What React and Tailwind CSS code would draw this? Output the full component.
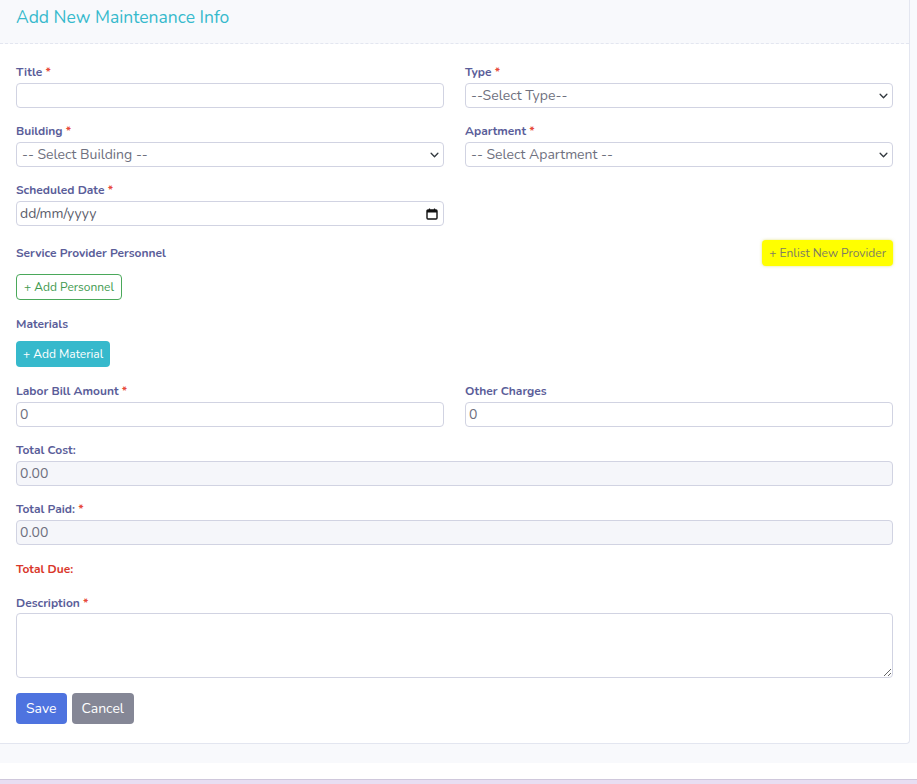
import React from "react";

const font = { fontFamily: '"Nunito", "Noto Sans", "Open Sans", sans-serif' };

function Label({ children, required, className = "" }) {
  return (
    <label className={`block text-[12px] leading-[15px] font-bold text-[#5a5d99] ${className}`}>
      {children}
      {required && <span className="text-[#e74a3b]"> *</span>}
    </label>
  );
}

function Chevron() {
  return (
    <svg className="absolute right-[4px] top-1/2 -translate-y-1/2" width="9" height="9" viewBox="0 0 16 16" fill="none">
      <path d="M2 5l6 6 6-6" stroke="#343a40" strokeWidth="2.4" strokeLinecap="round" strokeLinejoin="round" />
    </svg>
  );
}

function Select({ text }) {
  return (
    <div className="relative h-[25px] rounded-[4px] border border-[#d1d3e2] bg-white px-[5px] text-[14px] leading-[23px] text-[#6e707e]">
      {text}
      <Chevron />
    </div>
  );
}

function Input({ value = "", disabled }) {
  return (
    <input
      readOnly
      value={value}
      className={`block h-[25px] w-full rounded-[4px] border border-[#d1d3e2] px-[3px] text-[14px] text-[#6e707e] outline-none ${disabled ? "bg-[#f5f6fa]" : "bg-white"}`}
    />
  );
}

export default function App() {
  return (
    <div className="min-h-[784px] bg-[#f8f9fc]" style={font}>
      <div className="w-[910px] rounded-br-[4px] border-r border-b border-[#e3e6f0] bg-white">
        <div className="flex h-[44px] items-center border-b border-dashed border-[#e3e6f0] bg-[#f8f9fc] px-4 pb-[8px]">
          <h1 className="text-[17.5px] font-normal text-[#36b9cc]">Add New Maintenance Info</h1>
        </div>

        <div className="px-4 pt-[21px] pb-[19px]">
          <div className="grid grid-cols-2 gap-x-[21px]">
            <div className="mb-[16px]">
              <Label required className="mb-[3px]">Title</Label>
              <Input />
            </div>
            <div className="mb-[16px]">
              <Label required className="mb-[3px]">Type</Label>
              <Select text="--Select Type--" />
            </div>
            <div className="mb-[16px]">
              <Label required className="mb-[3px]">Building</Label>
              <Select text="-- Select Building --" />
            </div>
            <div className="mb-[16px]">
              <Label required className="mb-[3px]">Apartment</Label>
              <Select text="-- Select Apartment --" />
            </div>
            <div className="mb-[15px]">
              <Label required className="mb-[3px]">Scheduled Date</Label>
              <div className="flex h-[25px] items-center justify-between rounded-[4px] border border-[#d1d3e2] bg-white pl-[3px] pr-[5px] text-[14px] text-[#6e707e]">
                <span className="text-[#5a5c69]">dd/mm/yyyy</span>
                <svg width="12" height="12" viewBox="0 0 12 12" fill="none">
                  <rect x="1" y="2" width="10" height="9" rx="1" stroke="#111" strokeWidth="1.4" />
                  <rect x="1" y="2" width="10" height="2.5" fill="#111" />
                  <path d="M3.5 0.5v2M8.5 0.5v2" stroke="#111" strokeWidth="1.2" />
                </svg>
              </div>
            </div>
            <div />
          </div>

          <div className="-mt-[1px] flex items-center justify-between">
            <Label>Service Provider Personnel</Label>
            <button className="h-[26px] rounded-[4px] bg-[#ffff00] px-[7px] text-[12px] text-[#7d7c63] shadow-[0_0_3px_rgba(200,200,0,0.5)]">
              + Enlist New Provider
            </button>
          </div>
          <button className="mt-[8px] h-[26px] rounded-[4px] border border-[#4aa85a] bg-white px-[7px] text-[12px] text-[#3f9a4f]">
            + Add Personnel
          </button>

          <Label className="mt-[17px] mb-[9px]">Materials</Label>
          <button className="h-[26px] rounded-[4px] bg-[#36b9cc] px-[7px] text-[12px] text-white">
            + Add Material
          </button>

          <div className="mt-[17px] grid grid-cols-2 gap-x-[21px]">
            <div className="mb-[16px]">
              <Label required className="mb-[3px]">Labor Bill Amount</Label>
              <Input value="0" />
            </div>
            <div className="mb-[16px]">
              <Label className="mb-[3px]">Other Charges</Label>
              <Input value="0" />
            </div>
          </div>

          <div className="mb-[16px]">
            <Label className="mb-[3px]">Total Cost:</Label>
            <Input value="0.00" disabled />
          </div>
          <div className="mb-[17px]">
            <Label required className="mb-[3px]">Total Paid:</Label>
            <Input value="0.00" disabled />
          </div>

          <Label className="!text-[#d9372b] mb-[19px]">Total Due:</Label>

          <div className="mb-[15px]">
            <Label required className="mb-[2px]">Description</Label>
            <textarea readOnly className="block h-[65px] w-full resize-y rounded-[4px] border border-[#d1d3e2] bg-white outline-none" />
          </div>

          <div className="flex gap-[5px]">
            <button className="h-[31px] rounded-[4px] bg-[#4e73df] px-[10px] text-[14px] text-white">Save</button>
            <button className="h-[31px] rounded-[4px] bg-[#858796] px-[10px] text-[14px] text-white">Cancel</button>
          </div>
        </div>
      </div>

      <div className="h-[19px]" />
      <div className="h-[16px] bg-white" />
      <div className="h-[6px] border-t border-[#cfc8dc] bg-[#e8def2]" />
    </div>
  );
}
